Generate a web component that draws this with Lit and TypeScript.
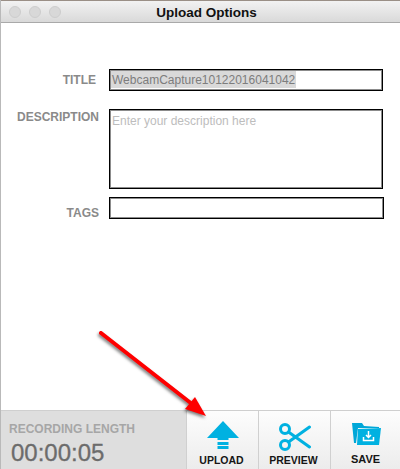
import { LitElement, html, css, svg } from "lit";
import { customElement } from "lit/decorators.js";

@customElement("app-root")
export class AppRoot extends LitElement {
  static styles = css`
    :host { display: block; width: 400px; height: 469px; overflow: hidden; position: relative; font-family: "Liberation Sans", Arial, sans-serif; background: #fff; }
    .window { display: flex; flex-direction: column; height: 469px; box-sizing: border-box; border-left: 1px solid #b9b9b9; background: #fff; }
    .titlebar { height: 23px; flex: none; box-sizing: border-box; border-bottom: 1px solid #a9a9a9; border-top: 1px solid #9a8f86; background: linear-gradient(#f2f2f2, #d9d9d9); display: flex; align-items: center; position: relative; }
    .lights { display: flex; gap: 8px; padding-left: 8px; }
    .light { width: 12px; height: 12px; border-radius: 50%; background: #d8d8d8; border: 1px solid #cdcdcd; box-sizing: border-box; }
    .title { position: absolute; left: 0; right: 0; top: 3px; text-align: center; font-size: 13.5px; font-weight: 700; color: #111; line-height: 18px; padding-left: 12px; }
    .form { flex: 1; display: grid; grid-template-columns: 98px 275px; column-gap: 10px; align-content: start; padding-top: 46px; }
    .label { text-align: right; font-size: 12px; font-weight: 700; color: #8a8a8a; line-height: 14px; }
    .label.t { padding-top: 4px; padding-right: 3px; }
    .label.d { padding-top: 1px; }
    .label.g { padding-top: 9px; }
    .field { box-sizing: border-box; border: 1px solid #000; box-shadow: inset 0 0 0 1px rgba(0, 0, 0, 0.45); background: #fff; font-size: 12px; line-height: 14px; }
    .f-title { height: 22px; width: 274px; padding: 1px; color: #7d7d7d; margin-bottom: 18px; }
    .f-title span { display: inline-block; background: #d9d9d9; line-height: 18px; height: 17px; padding: 0 1px; }
    .f-desc { height: 80px; width: 274px; padding: 4px 0 0 2px; color: #bdbdbd; margin-bottom: 8px; }
    .f-tags { height: 22px; width: 275px; }
    .footer { flex: none; height: 59px; display: flex; }
    .rec { width: 185px; box-sizing: border-box; background: #dedede; padding: 11px 0 0 8px; border-top: 1px solid #cfcfcf; }
    .rec-label { font-size: 12px; font-weight: 700; color: #a6a6a6; line-height: 14px; }
    .rec-time { font-size: 24px; color: #6c6c6c; line-height: 27px; margin-top: 3px; margin-left: 2px; -webkit-text-stroke: 0.3px #6c6c6c; }
    .btn { box-sizing: border-box; border-top: 1px solid #cfcfcf; border-left: 1px solid #d0d0d0; background: linear-gradient(#fdfdfd, #ececec); display: flex; flex-direction: column; align-items: center; font-size: 10.5px; font-weight: 700; color: #151515; }
    .btn svg { display: block; }
    .btn span { line-height: 14px; }
    .b1 { width: 72px; }
    .b1 svg { margin-top: 10px; }
    .b1 span { margin-top: 4px; padding-right: 2px; }
    .b2 { width: 72px; }
    .b2 svg { margin-top: 12px; }
    .b2 span { padding-right: 2px; }
    .b3 { width: 70px; font-size: 11px; }
    .b3 svg { margin-top: 12px; }
    .b3 span { margin-top: 7px; }
    .arrow { position: absolute; left: 0; top: 0; pointer-events: none; filter: drop-shadow(-1px 2px 1.5px rgba(0, 0, 0, 0.5)); }
  `;

  render() {
    return html`
      <div class="window">
        <div class="titlebar">
          <div class="lights"><i class="light"></i><i class="light"></i><i class="light"></i></div>
          <div class="title">Upload Options</div>
        </div>
        <div class="form">
          <div class="label t">TITLE</div>
          <div class="field f-title"><span>WebcamCapture10122016041042</span></div>
          <div class="label d">DESCRIPTION</div>
          <div class="field f-desc">Enter your description here</div>
          <div class="label g">TAGS</div>
          <div class="field f-tags"></div>
        </div>
        <div class="footer">
          <div class="rec">
            <div class="rec-label">RECORDING LENGTH</div>
            <div class="rec-time">00:00:05</div>
          </div>
          <div class="btn b1">
            <svg width="32" height="28" viewBox="0 0 32 28" fill="#00b1e1">
              <path d="M16 0 L32 17 L21.5 17 L21.5 19 L10.5 19 L10.5 17 L0 17 Z"/>
              <rect x="10.5" y="21" width="11" height="3"/>
              <rect x="10.5" y="25" width="11" height="3"/>
            </svg>
            <span>UPLOAD</span>
          </div>
          <div class="btn b2">
            <svg width="32" height="30" viewBox="0 0 32 30" fill="none" stroke="#00b1e1" stroke-width="3">
              <circle cx="6" cy="6" r="4.5"/>
              <circle cx="6" cy="22" r="4.5"/>
              <path d="M9.5 9 L30.5 24 M9.5 19 L30.5 4" stroke-linecap="round"/>
            </svg>
            <span>PREVIEW</span>
          </div>
          <div class="btn b3">
            <svg width="30" height="22" viewBox="0 0 30 22">
              <path d="M1 0 L11 0 L13 3 L28 4 L28 5 L7 5 L5 20 L3 20 Z" fill="#00a7d8"/>
              <path d="M7 6 L30 5 L28 22 L6 22 Z" fill="#00b1e1"/>
              <path d="M17.5 8 V14 M15 12 L17.5 14.5 L20 12 M12.5 14 V17.5 H22.5 V14" stroke="#fff" stroke-width="1.5" fill="none"/>
            </svg>
            <span>SAVE</span>
          </div>
        </div>
      </div>
      <svg class="arrow" width="400" height="469" viewBox="0 0 400 469">
        ${svg`
          <path d="M101 333 L192 404" stroke="#fe0000" stroke-width="4" stroke-linecap="round"/>
          <path d="M206 416 L185 409 L195 397 Z" fill="#fe0000"/>
        `}
      </svg>
    `;
  }
}
